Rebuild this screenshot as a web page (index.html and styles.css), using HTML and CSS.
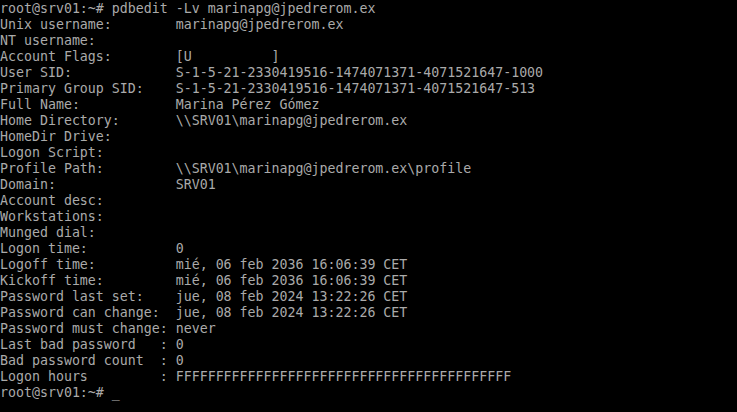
FILE: index.html
```html
<!DOCTYPE html>
<html lang="es">
<head>
<meta charset="utf-8">
<title>pdbedit</title>
<link rel="stylesheet" href="styles.css">
</head>
<body>
<pre class="term">root@srv01:~# pdbedit -Lv marinapg@jpedrerom.ex
Unix username:        marinapg@jpedrerom.ex
NT username:
Account Flags:        [U          ]
User SID:             S-1-5-21-2330419516-1474071371-4071521647-1000
Primary Group SID:    S-1-5-21-2330419516-1474071371-4071521647-513
Full Name:            Marina Pérez Gómez
Home Directory:       \\SRV01\marinapg@jpedrerom.ex
HomeDir Drive:
Logon Script:
Profile Path:         \\SRV01\marinapg@jpedrerom.ex\profile
Domain:               SRV01
Account desc:
Workstations:
Munged dial:
Logon time:           0
Logoff time:          mié, 06 feb 2036 16:06:39 CET
Kickoff time:         mié, 06 feb 2036 16:06:39 CET
Password last set:    jue, 08 feb 2024 13:22:26 CET
Password can change:  jue, 08 feb 2024 13:22:26 CET
Password must change: never
Last bad password   : 0
Bad password count  : 0
Logon hours         : FFFFFFFFFFFFFFFFFFFFFFFFFFFFFFFFFFFFFFFFFF
root@srv01:~# _</pre>
</body>
</html>
```
FILE: styles.css
```css
html, body {
  margin: 0;
  padding: 0;
  background: #000;
  height: 100%;
}
.term {
  margin: 0;
  padding: 1px 0 0 0;
  color: #aaaaaa;
  font-family: "DejaVu Sans Mono", monospace;
  font-size: 13.28px;
  line-height: 16px;
  white-space: pre;
}
```
